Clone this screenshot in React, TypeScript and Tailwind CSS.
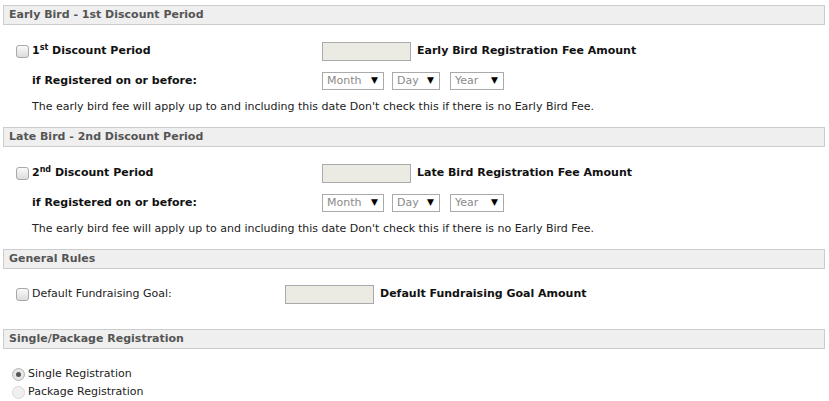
import React from "react";

const font = "font-['DejaVu_Sans',Verdana,Tahoma,sans-serif]";

function Header({ title }: { title: string }) {
  return (
    <div className="h-[20px] border border-[#cccccc] bg-[#efefef] pl-[5px] text-[11px] font-bold leading-[18px] text-[#555555]">
      {title}
    </div>
  );
}

function CheckBox() {
  return (
    <span className="inline-block h-[13px] w-[13px] shrink-0 rounded-[3px] border border-[#a8a8a8] bg-gradient-to-b from-[#fafafa] to-[#dcdcdc]" />
  );
}

function Radio({ checked }: { checked?: boolean }) {
  return (
    <span
      className={
        "flex h-[13px] w-[13px] shrink-0 items-center justify-center rounded-full border " +
        (checked ? "border-[#b5b5b5] bg-[#e6e6e6]" : "border-[#d8d8d8] bg-[#f0f0f0]")
      }
    >
      {checked && <span className="h-[5px] w-[5px] rounded-full bg-[#555555]" />}
    </span>
  );
}

function FakeInput() {
  return <div className="h-[19px] w-[89px] border border-[#aaaaaa] bg-[#ebebe4]" />;
}

function FakeSelect({ label, w }: { label: string; w: string }) {
  return (
    <div className={"flex h-[18px] items-center justify-between border border-[#aaaaaa] bg-white pl-[4px] pr-[5px] text-[11px] text-[#8a8a8a] " + w}>
      <span>{label}</span>
      <span className="text-[9px] text-black">▼</span>
    </div>
  );
}

function DiscountSection({
  title,
  ord,
  sup,
  feeLabel,
}: {
  title: string;
  ord: string;
  sup: string;
  feeLabel: string;
}) {
  return (
    <section>
      <Header title={title} />
      <div className="pl-[13px]">
        <div className="mt-[17px] flex h-[19px] items-center">
          <div className="flex w-[306px] items-center gap-[3px]">
            <CheckBox />
            <span className="text-[11px] font-bold text-[#111111]">
              {ord}
              <sup className="text-[8px]">{sup}</sup> Discount Period
            </span>
          </div>
          <FakeInput />
          <span className="ml-[6px] text-[11px] font-bold text-[#111111]">{feeLabel}</span>
        </div>
        <div className="mt-[11px] flex h-[18px] items-center">
          <div className="w-[306px] pl-[16px] text-[11px] font-bold text-[#111111]">if Registered on or before:</div>
          <div className="flex gap-[8px]">
            <FakeSelect label="Month" w="w-[62px]" />
            <div className="flex gap-[10px]">
              <FakeSelect label="Day" w="w-[48px]" />
              <FakeSelect label="Year" w="w-[54px]" />
            </div>
          </div>
        </div>
        <p className="mt-[10px] pl-[16px] text-[11px] leading-[14px] text-[#222222]">
          The early bird fee will apply up to and including this date Don't check this if there is no Early Bird Fee.
        </p>
      </div>
    </section>
  );
}

export default function App() {
  return (
    <div className={"min-h-[401px] bg-white pl-[3px] pr-[4px] pt-[5px] " + font}>
      <DiscountSection
        title="Early Bird - 1st Discount Period"
        ord="1"
        sup="st"
        feeLabel="Early Bird Registration Fee Amount"
      />
      <div className="mt-[13px]">
        <DiscountSection
          title="Late Bird - 2nd Discount Period"
          ord="2"
          sup="nd"
          feeLabel="Late Bird Registration Fee Amount"
        />
      </div>
      <section className="mt-[13px]">
        <Header title="General Rules" />
        <div className="mt-[16px] flex h-[19px] items-center pl-[13px]">
          <div className="flex w-[269px] items-center gap-[3px]">
            <CheckBox />
            <span className="text-[11px] text-[#222222]">Default Fundraising Goal:</span>
          </div>
          <FakeInput />
          <span className="ml-[6px] text-[11px] font-bold text-[#111111]">Default Fundraising Goal Amount</span>
        </div>
      </section>
      <section className="mt-[25px]">
        <Header title="Single/Package Registration" />
        <div className="mt-[16px] flex flex-col pl-[9px] text-[11px] text-[#222222]">
          <label className="flex h-[18px] items-center gap-[3px]">
            <Radio checked />
            <span>Single Registration</span>
          </label>
          <label className="flex h-[18px] items-center gap-[3px]">
            <Radio />
            <span>Package Registration</span>
          </label>
        </div>
      </section>
    </div>
  );
}
